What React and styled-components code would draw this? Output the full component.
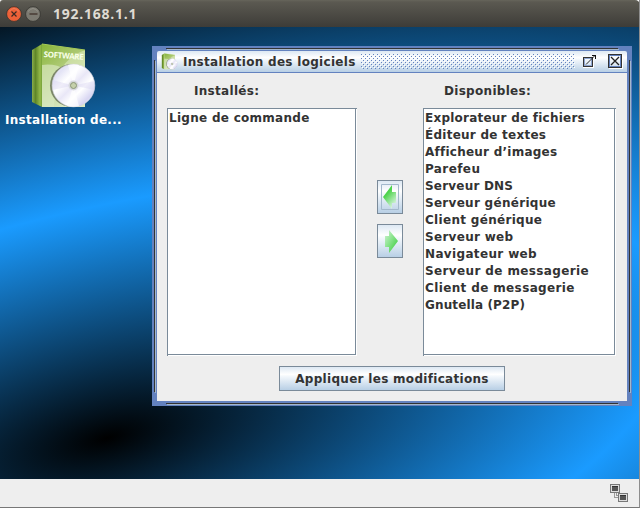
import React from "react";
import styled, { createGlobalStyle } from "styled-components";

const Global = createGlobalStyle`
  * { box-sizing: border-box; }
  body { margin: 0; overflow: hidden; }
`;

const metal = "linear-gradient(#dde8f3 0%, #ffffff 32%, #f4f8fc 40%, #b8cfe5 100%)";

const Screen = styled.div`
  width: 640px;
  height: 508px;
  display: flex;
  flex-direction: column;
  overflow: hidden;
  color: #333;
  font: bold 12px/17px "DejaVu Sans", sans-serif;
  letter-spacing: 0.3px;
  white-space: nowrap;
  border-right: 1px solid #8d8d8d;
  border-bottom: 1px solid #777;
`;

const TitleBar = styled.header`
  height: 27px;
  flex: none;
  width: 640px;
  display: flex;
  align-items: center;
  padding-left: 6px;
  gap: 3px;
  background: linear-gradient(#66655b 0, #5b5951 2px, #3d3c38 100%);
  border-radius: 3px 5px 0 0;
`;

const WindowTitle = styled.span`
  margin: 0 0 0 9px;
  color: #dfdbd2;
  letter-spacing: 0.75px;
  font: bold 14px/17px "Open Sans", "Noto Sans", sans-serif;
`;

const Desktop = styled.main`
  position: relative;
  flex: 1;
  display: flex;
  align-items: flex-start;
  overflow: hidden;
  background: #000;

  &::before {
    content: "";
    position: absolute;
    left: -1060px;
    top: -46px;
    width: 2334px;
    height: 914px;
    background: radial-gradient(ellipse closest-side, #000 0%, #1a9bff 50%, #000 100%);
    transform: rotate(-13.6deg);
  }
`;

const Shortcut = styled.div`
  position: relative;
  width: 152px;
  padding: 15px 0 0 5px;
  color: #fff;
  svg { display: block; margin: 0 0 2px 24px; }
`;

const Label = styled.span`
  display: block;
`;

const Frame = styled.section`
  position: relative;
  width: 480px;
  height: 360px;
  margin-top: 19px;
  padding: 5px;
  background: #6382bf;
`;

const Groove = styled.i`
  position: absolute;
  background: #333;
  box-shadow: 1px 1px 0 #a3b8cc;
  ${(p) => (p.$vertical ? "width: 1px; top: 14px; bottom: 14px;" : "height: 1px; left: 14px; right: 14px;")}
  ${(p) => p.$edge}: 2px;
`;

const FrameTitle = styled.div`
  height: 22px;
  display: flex;
  align-items: center;
  padding: 0 4px;
  background: ${metal};
  border-bottom: 1px solid #6382bf;
  border-radius: 2px 2px 0 0;
  > * { flex: none; }
`;

const FrameName = styled.span`
  width: 173px;
  margin: 0 5px;
  padding-top: 2px;
`;

const Bumps = styled.svg`
  width: 214px;
  height: 15px;
  margin-right: 8px;
`;

const Pane = styled.div`
  height: 328px;
  padding: 10px 11px 0 10px;
  background: #eee;
`;

const Columns = styled.div`
  display: grid;
  grid-template-columns: 190px 66px 193px;
`;

const Heading = styled.div`
  height: 25px;
  padding-left: ${(p) => p.$indent}px;
`;

const List = styled.ul`
  height: 248px;
  margin: 0;
  padding: 1px 0 0 1px;
  list-style: none;
  background: #fff;
  border: 1px solid #7a8a99;
  border-right: 0;
  border-bottom: 0;
  box-shadow: inset -1px -1px #fff, inset -2px -2px #7a8a99;
`;

const Item = styled.li`
  height: 17px;
  letter-spacing: ${(p) => p.$spacing}px;
`;

const Transfer = styled.div`
  display: flex;
  flex-direction: column;
  align-items: center;
  gap: 10px;
  padding: 72px 1px 0 0;
`;

const MetalButton = styled.button`
  display: flex;
  align-items: center;
  justify-content: center;
  padding: ${(p) => p.$pad || "0"};
  width: ${(p) => p.$w}px;
  height: ${(p) => p.$h}px;
  color: inherit;
  font: inherit;
  letter-spacing: inherit;
  border: 1px solid #7a8a99;
  background: ${metal};
`;

const Actions = styled.div`
  padding: 10px 0 0 112px;
`;

const Status = styled.footer`
  height: 28px;
  flex: none;
  display: flex;
  justify-content: flex-end;
  padding: 5px 11px 0 0;
  background: #eee;
`;

const Software = ({ size, height, id, named }) => (
  <svg width={size} height={height} viewBox="0 0 68 68" preserveAspectRatio="none">
    <defs>
      <linearGradient id={id + "side"}>
        <stop stopColor="#8aad4c" /><stop offset=".35" stopColor="#5f8628" />
        <stop offset=".8" stopColor="#94b949" /><stop offset="1" stopColor="#75a139" />
      </linearGradient>
      <linearGradient id={id + "face"} x2="0.5" y2="1">
        <stop stopColor="#86b437" /><stop offset=".4" stopColor="#a9c76d" /><stop offset="1" stopColor="#dce9c4" />
      </linearGradient>
      <linearGradient id={id + "disc"} x2="1" y2="1">
        <stop stopColor="#fff" /><stop offset=".18" stopColor="#e2e2f5" />
        <stop offset=".35" stopColor="#fff" /><stop offset=".5" stopColor="#e9e7f7" />
        <stop offset=".64" stopColor="#fff" /><stop offset=".82" stopColor="#d8d6f2" /><stop offset="1" stopColor="#fff" />
      </linearGradient>
    </defs>
    <path d="M3 8 13 2v63L3 60z" fill={`url(#${id}side)`} />
    <path d="M13 2 56 8v57H13z" fill={`url(#${id}face)`} />
    <path d="M13 23q13-2 24 5-12 17-12 37H13z" fill="#dce9c4" opacity=".65" />
    <path d="M56 8v18L25 43Q32 17 56 8z" fill="#e5efcb" opacity=".5" />
    <path d="M13 2 56 8" stroke="#a5c957" />
    {named && (
      <text x="14.5" y="15" fill="#f8ffe8" transform="rotate(4 14 15)" textLength="40" fontSize="8" fontFamily="Open Sans" fontWeight="bold" letterSpacing="0">SOFTWARE</text>
    )}
    <circle cx="42.5" cy="43.5" r="21.5" fill="#7b8668" />
    <circle cx="44.5" cy="43.5" r="21.3" fill={`url(#${id}disc)`} stroke="#d4d4df" strokeWidth=".6" />
    <path d="M44.5 43.5 39 23q6-2 11 0zM44.5 43.5 50 64q-6 2-12 0z" fill="#fff" opacity=".65" />
    <path d="M44.5 43.5 23.5 38v10zM44.5 43.5 65.5 39v9z" fill="#d7d3f1" opacity=".4" />
    <circle cx="44.5" cy="43.5" r="5" fill="#d7d8dc" />
    <circle cx="44.5" cy="43.5" r="3" fill="#c5d0aa" stroke="#8b9777" />
  </svg>
);

const WindowButton = ({ close }) => (
  <svg width="16" height="16" viewBox="0 0 16 16">
    <circle cx="8" cy="8" r="7.4" fill={close ? "#ed6138" : "#7c7a71"} stroke="#34332e" strokeWidth=".8" />
    <path d="M3 5.5Q8-.5 13 5.5" fill="none" stroke="#fff" opacity=".18" />
    <path d={close ? "M5.5 5.5l5 5m0-5-5 5" : "M4.5 8h8"} stroke="#3b2a24" strokeWidth="1.2" />
  </svg>
);

const Arrow = ({ right }) => (
  <svg width="24" height="32" viewBox="0 0 24 32">
    <defs>
      <linearGradient id={right ? "greenRight" : "greenLeft"} x1="0" y1="0" x2={right ? "1" : ".6"} y2="1">
        <stop stopColor={right ? "#d4f3d7" : "#43d043"} /><stop offset=".4" stopColor={right ? "#90e594" : "#4ed34e"} />
        <stop offset="1" stopColor={right ? "#2fc92f" : "#d7f4dc"} />
      </linearGradient>
    </defs>
    {!right && <path d="M3.5 3.5h17v25h-17z" fill="none" stroke="#a3b8cc" />}
    <path d={right ? "M7 11h4V5l9 11-9 12v-6H7z" : "M18 11h-4V4L5 16l9 12v-6h4z"} fill={`url(#${right ? "greenRight" : "greenLeft"})`} />
  </svg>
);

const available = [
  ["Explorateur de fichiers", 0.23],
  ["Éditeur de textes", 0.25],
  ["Afficheur d’images", 0.24],
  ["Parefeu", 0.4],
  ["Serveur DNS", 0.2],
  ["Serveur générique", 0.29],
  ["Client générique", 0.31],
  ["Serveur web", 0.3],
  ["Navigateur web", 0.35],
  ["Serveur de messagerie", 0.38],
  ["Client de messagerie", 0.37],
  ["Gnutella (P2P)", 0.13],
];

export default function App() {
  return (
    <Screen>
      <Global />
      <TitleBar>
        <WindowButton close />
        <WindowButton />
        <WindowTitle>192.168.1.1</WindowTitle>
      </TitleBar>
      <Desktop>
        <Shortcut>
          <Software size={68} height={68} id="large" named />
          <Label>Installation de...</Label>
        </Shortcut>
        <Frame>
          <Groove $edge="top" /><Groove $edge="bottom" />
          <Groove $vertical $edge="left" /><Groove $vertical $edge="right" />
          <FrameTitle>
            <Software size={17} height={17} id="small" />
            <FrameName>Installation des logiciels</FrameName>
            <Bumps>
              <defs>
                <pattern id="bumps" width="4" height="4" patternUnits="userSpaceOnUse">
                  <path d="M0 0h1v1H0zM2 2h1v1H2z" fill="#6382bf" />
                  <path d="M1 1h1v1H1zM3 3h1v1H3z" fill="#fff" />
                </pattern>
              </defs>
              <rect width="214" height="15" fill="url(#bumps)" />
            </Bumps>
            <svg width="40" height="17" shapeRendering="crispEdges" fill="none">
              <path d="M0 14.5h10.5V6M26 15.5h13.5V2" stroke="#fff" />
              <path d="M.5 4.5h9v9h-9z" stroke="#333" />
              <path d="M1.5 5.5h7v7h-7z" stroke="#8fa5d0" />
              <path d="M3 11.5 12 2.5" stroke="#111" strokeWidth=".9" shapeRendering="auto" />
              <path d="M9 2.5h3.5V6" stroke="#111" />
              <path d="M25.5 1.5h13v13h-13z" stroke="#333" />
              <path d="M26.5 2.5h11v11h-11z" stroke="#6382bf" />
              <path d="M28 4l8 8m0-8-8 8" stroke="#222" strokeWidth="1.3" shapeRendering="auto" />
            </svg>
          </FrameTitle>
          <Pane>
            <Columns>
              <Heading $indent={27}>Installés:</Heading>
              <span />
              <Heading $indent={21}>Disponibles:</Heading>
              <List><Item $spacing={0.28}>Ligne de commande</Item></List>
              <Transfer>
                <MetalButton $w={26} $h={34} aria-label="Installer"><Arrow /></MetalButton>
                <MetalButton $w={26} $h={34} aria-label="Retirer"><Arrow right /></MetalButton>
              </Transfer>
              <List>
                {available.map(([name, spacing]) => <Item key={name} $spacing={spacing}>{name}</Item>)}
              </List>
            </Columns>
            <Actions>
              <MetalButton $w={226} $h={25} $pad="2px 0 0">Appliquer les modifications</MetalButton>
            </Actions>
          </Pane>
        </Frame>
      </Desktop>
      <Status>
        <svg width="18" height="18" shapeRendering="crispEdges" fill="none">
          <path d="M4.5 9v4.5H8M6.5 9v2.5H9" stroke="#999" />
          <path d="M.5.5h9v8h-9zM8.5 9.5h9v8h-9z" fill="#ddd" stroke="#777" />
          <path d="M2 2h6v5H2zM10 11h6v5h-6z" fill="#555" />
          <path d="M2 2.5h6M10 11.5h6" stroke="#333" />
        </svg>
      </Status>
    </Screen>
  );
}
